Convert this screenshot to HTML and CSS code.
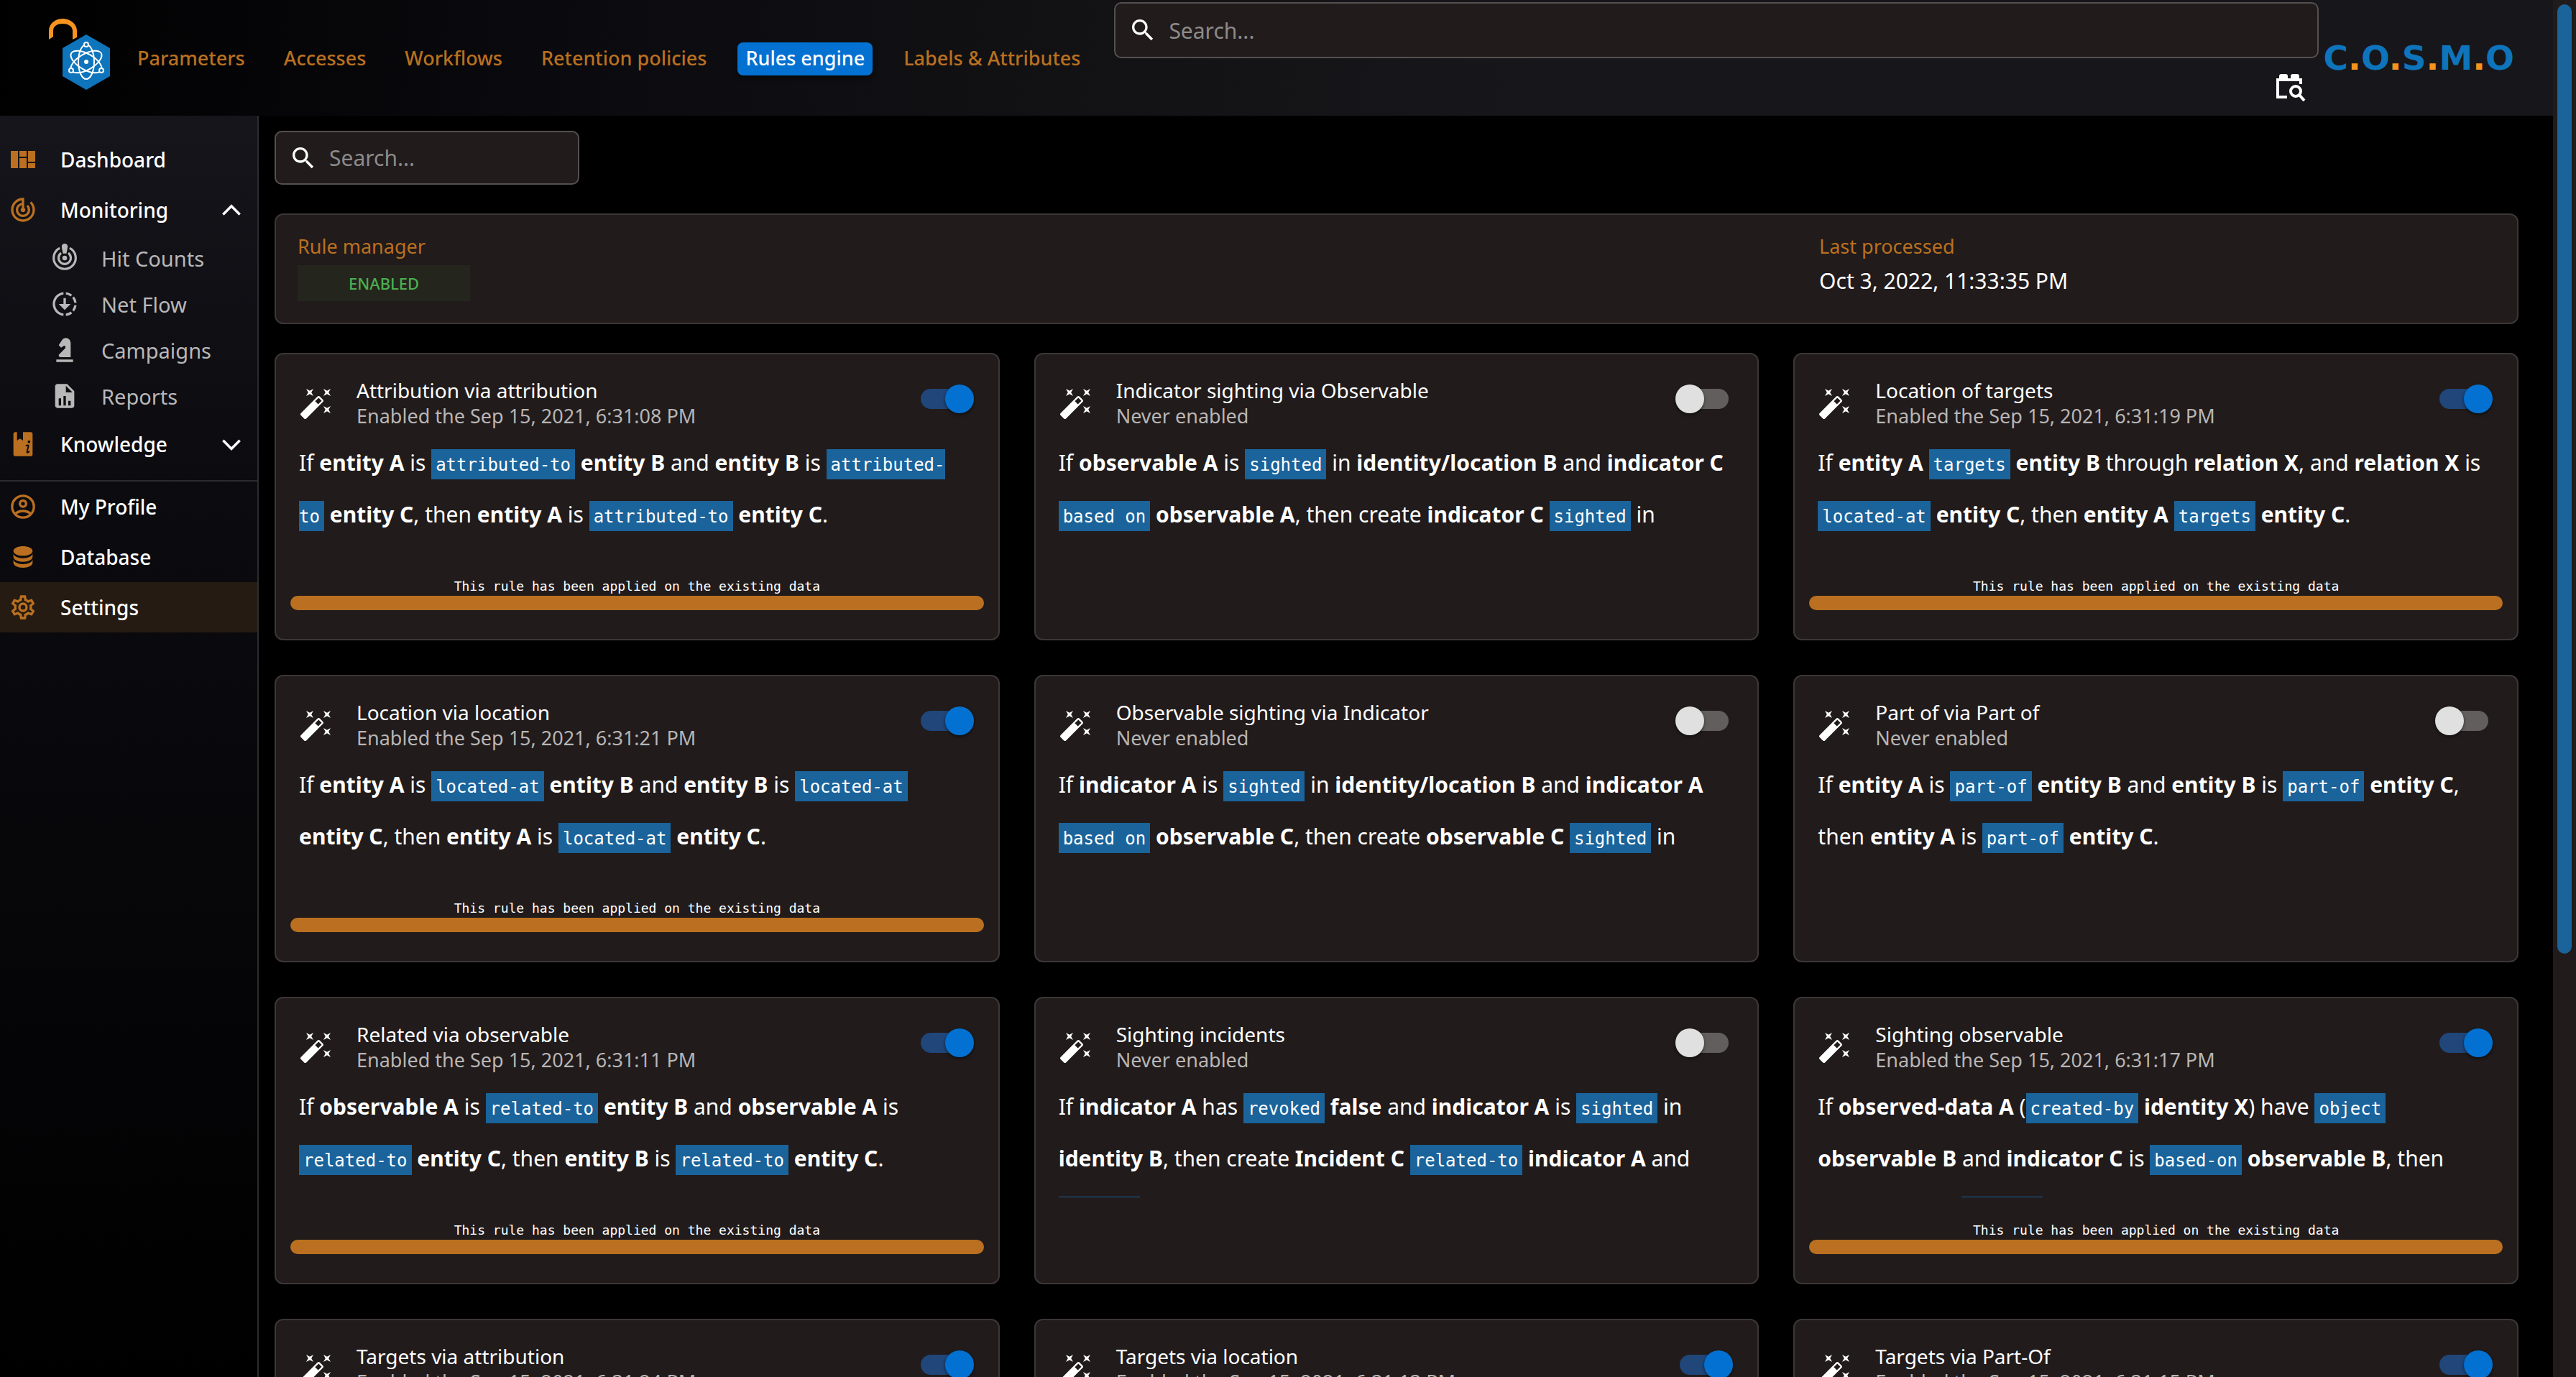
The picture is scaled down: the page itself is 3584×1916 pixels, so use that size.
FILE: index.html
```html
<!DOCTYPE html>
<html lang="en">
<head>
<meta charset="utf-8">
<title>Rules engine - Settings</title>
<link rel="stylesheet" href="styles.css">
</head>
<body>
<svg class="sprite" aria-hidden="true">
  <symbol id="i-search" viewBox="0 0 24 24"><path d="M15.5 14h-.79l-.28-.27C15.41 12.59 16 11.11 16 9.5 16 5.91 13.09 3 9.5 3S3 5.91 3 9.5 5.91 16 9.5 16c1.61 0 3.09-.59 4.23-1.57l.27.28v.79l5 4.99L20.49 19l-4.99-5zm-6 0C7.01 14 5 11.99 5 9.5S7.01 5 9.5 5 14 7.01 14 9.5 11.99 14 9.5 14z"/></symbol>
  <symbol id="i-wand" viewBox="0 0 24 24"><path d="M7.5,5.6L5,7L6.4,4.5L5,2L7.5,3.4L10,2L8.6,4.5L10,7L7.5,5.6M19.5,15.4L22,14L20.6,16.5L22,19L19.5,17.6L17,19L18.4,16.5L17,14L19.5,15.4M22,2L20.6,4.5L22,7L19.5,5.6L17,7L18.4,4.5L17,2L19.5,3.4L22,2M13.34,12.78L15.78,10.34L13.66,8.22L11.22,10.66L13.34,12.78M14.37,7.29L16.71,9.63C17.1,10 17.1,10.65 16.71,11.04L5.04,22.71C4.65,23.1 4,23.1 3.63,22.71L1.29,20.37C0.9,20 0.9,19.35 1.29,18.96L12.96,7.29C13.35,6.9 14,6.9 14.37,7.29Z"/></symbol>
</svg>
<div class="app">
  <div class="page">
    <header class="topbar">
      <a class="brand" href="#" aria-label="Home">
        <svg width="92" height="104" viewBox="64 24 92 104">
          <path d="M68 55V43C68 32 78 26 87 26S107 32 107 43V52L101 55V43C101 36 94 33 87 33S74 36 74 43V51z" fill="#f7931e"/>
          <path d="M120 48l33 19v39l-33 19-33-19V67z" fill="#0e74bb"/>
          <g fill="none" stroke="#fff" stroke-width="2">
            <ellipse cx="120" cy="86" rx="11" ry="24"/>
            <ellipse cx="120" cy="86" rx="11" ry="24" transform="rotate(60 120 86)"/>
            <ellipse cx="120" cy="86" rx="11" ry="24" transform="rotate(-60 120 86)"/>
            <g fill="#0e74bb"><circle cx="120" cy="62" r="3"/><circle cx="99" cy="98" r="3"/><circle cx="141" cy="98" r="3"/></g>
          </g>
          <circle cx="120" cy="86" r="3" fill="#fff"/>
        </svg>
      </a>
      <nav class="tabs" aria-label="Settings sections">
        <a href="#">Parameters</a>
        <a href="#">Accesses</a>
        <a href="#">Workflows</a>
        <a href="#">Retention policies</a>
        <a href="#" class="active" aria-current="page">Rules engine</a>
        <a href="#">Labels &amp; Attributes</a>
      </nav>
      <div class="top-search">
        <label class="search search-wide">
          <svg class="icon"><use href="#i-search"/></svg>
          <input type="search" placeholder="Search..." aria-label="Search everything">
        </label>
        <button class="bulk" type="button" aria-label="Advanced search">
          <svg width="42" height="42" viewBox="0 0 42 42">
            <path d="M5 10V7a3 3 0 0 1 3-3h6a3 3 0 0 1 3 3v3zM21 10V7a3 3 0 0 1 3-3h6a3 3 0 0 1 3 3v3z" fill="#fff"/>
            <path d="M35 18V12H3V36H16" fill="none" stroke="#fff" stroke-width="4"/>
            <circle cx="28" cy="28" r="7" fill="none" stroke="#fff" stroke-width="4"/>
            <path d="M33 33l7 8" stroke="#fff" stroke-width="4"/>
          </svg>
        </button>
      </div>
      <a class="wordmark" href="#">C<i>.</i>O<i>.</i>S<i>.</i>M<i>.</i>O</a>
    </header>
    <div class="body">
      <nav class="sidebar" aria-label="Main">
        <a class="item" href="#"><svg class="icon" viewBox="0 0 40 40"><path d="M3 8h10v24H3zM15 8h10v8H15zM15 18h10v14H15zM27 8h10v15H27zM27 25h10v7H27z"/></svg>Dashboard</a>
        <button class="item" type="button" aria-expanded="true"><svg class="icon" viewBox="0 0 24 24"><path d="M19.07 4.93l-1.41 1.41C19.1 7.79 20 9.79 20 12c0 4.42-3.58 8-8 8s-8-3.58-8-8c0-4.08 3.05-7.44 7-7.93v2.02C8.16 6.57 6 9.03 6 12c0 3.31 2.69 6 6 6s6-2.69 6-6c0-1.66-.67-3.16-1.76-4.24l-1.41 1.41C15.55 9.9 16 10.9 16 12c0 2.21-1.79 4-4 4s-4-1.79-4-4c0-1.86 1.28-3.41 3-3.86v2.14c-.6.35-1 .98-1 1.72 0 1.1.9 2 2 2s2-.9 2-2c0-.74-.4-1.38-1-1.72V2h-1C6.48 2 2 6.48 2 12s4.48 10 10 10 10-4.48 10-10c0-2.76-1.12-5.26-2.93-7.07z"/></svg>Monitoring<svg class="chevron" viewBox="0 0 24 24"><path d="M2 17.500l10-10 10 10"/></svg></button>
        <div class="sub">
          <a class="item" href="#"><svg class="icon" viewBox="0 0 24 24"><g fill="none" stroke="#b8b8b8" stroke-width="1.900"><path d="M7.900 3.700A9.200 9.200 0 1 0 16.100 3.700"/><path d="M9 7.800A5.100 5.100 0 1 0 15 7.800"/></g><circle cx="12" cy="12" r="2"/><path d="M12 0c1.600 0 2.600 1.100 2.500 2.700L13.500 8.200h-3L9.500 2.700C9.400 1.100 10.400 0 12 0z"/></svg>Hit Counts</a>
          <a class="item" href="#"><svg class="icon" viewBox="0 0 24 24"><path d="M18.320 4.260A9.949 9.949 0 0 0 13 2.050v2.020c1.460.18 2.790.76 3.900 1.620l1.420-1.430zM19.930 11h2.020c-.2-2.010-1-3.840-2.210-5.320L18.310 7.100a7.941 7.941 0 0 1 1.620 3.900zm-1.620 5.900 1.430 1.430a9.981 9.981 0 0 0 2.210-5.320h-2.020a7.945 7.945 0 0 1-1.620 3.890zM13 19.930v2.020c2.010-.2 3.840-1 5.320-2.210l-1.430-1.430c-1.100.86-2.430 1.440-3.890 1.620zM11 7h2v5h4l-5 5-5-5h4zM11 19.930v2.020c-5.050-.5-9-4.760-9-9.950s3.950-9.450 9-9.950v2.020C7.050 4.560 4 7.920 4 12s3.050 7.440 7 7.930z"/></svg>Net Flow</a>
          <a class="item" href="#"><svg class="icon" viewBox="0 0 24 24"><path d="M19,22H5V20H19V22M13,2V2C11.750,2 10.580,2.620 9.890,3.660L7,8L9,10L11.060,8.630C11.500,8.320 12.140,8.440 12.450,8.900C12.470,8.930 12.500,8.960 12.500,9V9C12.800,9.590 12.690,10.300 12.220,10.770L7.420,15.570C6.870,16.130 6.870,17.030 7.430,17.580C7.690,17.840 8.050,18 8.420,18H17V6A4,4 0 0,0 13,2Z"/></svg>Campaigns</a>
          <a class="item" href="#"><svg class="icon" viewBox="0 0 24 24"><path d="M13,9H18.500L13,3.500V9M6,2H14L20,8V20A2,2 0 0,1 18,22H6C4.890,22 4,21.100 4,20V4C4,2.890 4.890,2 6,2M7,20H9V14H7V20M11,20H13V12H11V20M15,20H17V16H15V20Z"/></svg>Reports</a>
        </div>
        <button class="item" type="button" aria-expanded="false"><svg class="icon" viewBox="0 0 24 24"><path fill-rule="evenodd" d="M5.500 2H7V9l2.500-1.700L12 9V2h6.500A1.500 1.500 0 0 1 20 3.500v17a1.500 1.500 0 0 1-1.500 1.500h-13A1.500 1.500 0 0 1 4 20.500v-17A1.500 1.500 0 0 1 5.500 2z"/><circle cx="17" cy="10" r="1.100" fill="#0d0c11"/><path d="M14.300 13.500c1.400-.8 2.200-.9 2.300-.2.100.6-1.500 4.600-1.200 5.600.2.500 1-.1 2-1" fill="none" stroke="#0d0c11" stroke-width="1.200"/></svg>Knowledge<svg class="chevron" viewBox="0 0 24 24"><path d="M2 7.500l10 10 10-10"/></svg></button>
        <hr>
        <a class="item" href="#"><svg class="icon" viewBox="0 0 24 24"><g fill="none" stroke="#ba7020" stroke-width="2"><circle cx="12" cy="12" r="9.100"/><circle cx="12" cy="9.500" r="2.600"/><path d="M5.500 18c3.500-3.200 9.500-3.200 13 0"/></g></svg>My Profile</a>
        <a class="item" href="#"><svg class="icon" viewBox="0 0 24 24"><path d="M12,3C7.580,3 4,4.790 4,7C4,9.210 7.580,11 12,11C16.420,11 20,9.210 20,7C20,4.790 16.420,3 12,3M4,9V12C4,14.210 7.580,16 12,16C16.420,16 20,14.210 20,12V9C20,11.210 16.420,13 12,13C7.580,13 4,11.210 4,9M4,14V17C4,19.210 7.580,21 12,21C16.420,21 20,19.210 20,17V14C20,16.210 16.420,18 12,18C7.580,18 4,16.210 4,14Z"/></svg>Database</a>
        <a class="item active" href="#" aria-current="page"><svg class="icon" viewBox="0 0 24 24"><path d="M12,8A4,4 0 0,1 16,12A4,4 0 0,1 12,16A4,4 0 0,1 8,12A4,4 0 0,1 12,8M12,10A2,2 0 0,0 10,12A2,2 0 0,0 12,14A2,2 0 0,0 14,12A2,2 0 0,0 12,10M10,22C9.750,22 9.540,21.820 9.500,21.580L9.130,18.930C8.500,18.680 7.960,18.340 7.440,17.940L4.950,18.950C4.730,19.030 4.460,18.950 4.340,18.730L2.340,15.270C2.210,15.050 2.270,14.780 2.460,14.630L4.570,12.970L4.500,12L4.570,11L2.460,9.370C2.270,9.220 2.210,8.950 2.340,8.730L4.340,5.270C4.460,5.050 4.730,4.960 4.950,5.050L7.440,6.050C7.960,5.660 8.500,5.320 9.130,5.070L9.500,2.420C9.540,2.180 9.750,2 10,2H14C14.250,2 14.460,2.180 14.500,2.420L14.870,5.070C15.500,5.320 16.040,5.660 16.560,6.050L19.050,5.050C19.270,4.960 19.540,5.050 19.660,5.270L21.660,8.730C21.790,8.950 21.730,9.220 21.540,9.370L19.430,11L19.500,12L19.430,13L21.540,14.630C21.730,14.780 21.790,15.050 21.660,15.270L19.660,18.730C19.540,18.950 19.270,19.040 19.050,18.950L16.560,17.950C16.040,18.340 15.500,18.680 14.870,18.930L14.500,21.580C14.460,21.820 14.250,22 14,22H10M11.250,4L10.880,6.610C9.680,6.860 8.620,7.500 7.850,8.390L5.440,7.350L4.690,8.650L6.800,10.200C6.400,11.370 6.400,12.640 6.800,13.800L4.680,15.360L5.430,16.660L7.860,15.620C8.630,16.500 9.680,17.140 10.870,17.380L11.240,20H12.760L13.130,17.390C14.320,17.140 15.370,16.500 16.140,15.620L18.570,16.660L19.320,15.360L17.200,13.810C17.600,12.640 17.600,11.370 17.200,10.200L19.310,8.650L18.560,7.350L16.150,8.390C15.380,7.500 14.320,6.860 13.120,6.620L12.750,4H11.250Z"/></svg>Settings</a>
      </nav>
      <main class="content">
        <label class="search search-small">
          <svg class="icon"><use href="#i-search"/></svg>
          <input type="search" placeholder="Search..." aria-label="Search rules">
        </label>
        <section class="manager">
          <div><h2>Rule manager</h2><span class="status">ENABLED</span></div>
          <div><h2>Last processed</h2><p class="date">Oct 3, 2022, 11:33:35 PM</p></div>
        </section>
        <section class="rules">
          <article class="rule">
            <header><svg class="wand"><use href="#i-wand"/></svg><div class="heading"><h3 id="r1">Attribution via attribution</h3><p>Enabled the Sep 15, 2021, 6:31:08 PM</p></div><input class="switch" type="checkbox" aria-labelledby="r1" checked></header>
            <p class="text">If <b>entity A</b> is <code>attributed-to</code> <b>entity B</b> and <b>entity B</b> is <code>attributed-<br>to</code> <b>entity C</b>, then <b>entity A</b> is <code>attributed-to</code> <b>entity C</b>.</p>
            <div class="applied"><span>This rule has been applied on the existing data</span><div class="bar"></div></div>
          </article>
          <article class="rule">
            <header><svg class="wand"><use href="#i-wand"/></svg><div class="heading"><h3 id="r2">Indicator sighting via Observable</h3><p>Never enabled</p></div><input class="switch" type="checkbox" aria-labelledby="r2"></header>
            <p class="text">If <b>observable A</b> is <code>sighted</code> in <b>identity/location B</b> and <b>indicator C</b><br><code>based on</code> <b>observable A</b>, then create <b>indicator C</b> <code>sighted</code> in</p>
          </article>
          <article class="rule">
            <header><svg class="wand"><use href="#i-wand"/></svg><div class="heading"><h3 id="r3">Location of targets</h3><p>Enabled the Sep 15, 2021, 6:31:19 PM</p></div><input class="switch" type="checkbox" aria-labelledby="r3" checked></header>
            <p class="text">If <b>entity A</b> <code>targets</code> <b>entity B</b> through <b>relation X</b>, and <b>relation X</b> is<br><code>located-at</code> <b>entity C</b>, then <b>entity A</b> <code>targets</code> <b>entity C</b>.</p>
            <div class="applied"><span>This rule has been applied on the existing data</span><div class="bar"></div></div>
          </article>
          <article class="rule">
            <header><svg class="wand"><use href="#i-wand"/></svg><div class="heading"><h3 id="r4">Location via location</h3><p>Enabled the Sep 15, 2021, 6:31:21 PM</p></div><input class="switch" type="checkbox" aria-labelledby="r4" checked></header>
            <p class="text">If <b>entity A</b> is <code>located-at</code> <b>entity B</b> and <b>entity B</b> is <code>located-at</code><br><b>entity C</b>, then <b>entity A</b> is <code>located-at</code> <b>entity C</b>.</p>
            <div class="applied"><span>This rule has been applied on the existing data</span><div class="bar"></div></div>
          </article>
          <article class="rule">
            <header><svg class="wand"><use href="#i-wand"/></svg><div class="heading"><h3 id="r5">Observable sighting via Indicator</h3><p>Never enabled</p></div><input class="switch" type="checkbox" aria-labelledby="r5"></header>
            <p class="text">If <b>indicator A</b> is <code>sighted</code> in <b>identity/location B</b> and <b>indicator A</b><br><code>based on</code> <b>observable C</b>, then create <b>observable C</b> <code>sighted</code> in</p>
          </article>
          <article class="rule">
            <header><svg class="wand"><use href="#i-wand"/></svg><div class="heading"><h3 id="r6">Part of via Part of</h3><p>Never enabled</p></div><input class="switch" type="checkbox" aria-labelledby="r6"></header>
            <p class="text">If <b>entity A</b> is <code>part-of</code> <b>entity B</b> and <b>entity B</b> is <code>part-of</code> <b>entity C</b>,<br>then <b>entity A</b> is <code>part-of</code> <b>entity C</b>.</p>
          </article>
          <article class="rule">
            <header><svg class="wand"><use href="#i-wand"/></svg><div class="heading"><h3 id="r7">Related via observable</h3><p>Enabled the Sep 15, 2021, 6:31:11 PM</p></div><input class="switch" type="checkbox" aria-labelledby="r7" checked></header>
            <p class="text">If <b>observable A</b> is <code>related-to</code> <b>entity B</b> and <b>observable A</b> is<br><code>related-to</code> <b>entity C</b>, then <b>entity B</b> is <code>related-to</code> <b>entity C</b>.</p>
            <div class="applied"><span>This rule has been applied on the existing data</span><div class="bar"></div></div>
          </article>
          <article class="rule">
            <header><svg class="wand"><use href="#i-wand"/></svg><div class="heading"><h3 id="r8">Sighting incidents</h3><p>Never enabled</p></div><input class="switch" type="checkbox" aria-labelledby="r8"></header>
            <p class="text">If <b>indicator A</b> has <code>revoked</code> <b>false</b> and <b>indicator A</b> is <code>sighted</code> in<br><b>identity B</b>, then create <b>Incident C</b> <code>related-to</code> <b>indicator A</b> and<br><code>targets</code></p>
          </article>
          <article class="rule">
            <header><svg class="wand"><use href="#i-wand"/></svg><div class="heading"><h3 id="r9">Sighting observable</h3><p>Enabled the Sep 15, 2021, 6:31:17 PM</p></div><input class="switch" type="checkbox" aria-labelledby="r9" checked></header>
            <p class="text">If <b>observed-data A</b> (<code>created-by</code> <b>identity X</b>) have <code>object</code><br><b>observable B</b> and <b>indicator C</b> is <code>based-on</code> <b>observable B</b>, then<br><b>indicator C</b> is <code>sighted</code></p>
            <div class="applied"><span>This rule has been applied on the existing data</span><div class="bar"></div></div>
          </article>
          <article class="rule">
            <header><svg class="wand"><use href="#i-wand"/></svg><div class="heading"><h3 id="r10">Targets via attribution</h3><p>Enabled the Sep 15, 2021, 6:31:24 PM</p></div><input class="switch" type="checkbox" aria-labelledby="r10" checked></header>
          </article>
          <article class="rule">
            <header><svg class="wand"><use href="#i-wand"/></svg><div class="heading"><h3 id="r11">Targets via location</h3><p>Enabled the Sep 15, 2021, 6:31:13 PM</p></div><input class="switch" type="checkbox" aria-labelledby="r11" checked></header>
          </article>
          <article class="rule">
            <header><svg class="wand"><use href="#i-wand"/></svg><div class="heading"><h3 id="r12">Targets via Part-Of</h3><p>Enabled the Sep 15, 2021, 6:31:15 PM</p></div><input class="switch" type="checkbox" aria-labelledby="r12" checked></header>
          </article>
        </section>
      </main>
    </div>
  </div>
  <div class="scrollbar"><div class="thumb"></div></div>
</div>
</body>
</html>
```
FILE: styles.css
```css
:root {
  --accent: #ba7020;
  --primary: #0371d1;
  --chip: #1a639b;
  --paper: #211b1b;
  --line: #3c3736;
}
* { box-sizing: border-box; }
body {
  margin: 0;
  background: #000;
  color: #fff;
  font-family: "Noto Sans", sans-serif;
  font-size: 28px;
}
h2, h3, p { margin: 0; font-weight: 400; }
a { color: inherit; text-decoration: none; }
button { border: 0; padding: 0; background: none; font: inherit; color: inherit; text-align: left; }
svg { display: block; flex: none; fill: currentColor; }
.sprite { width: 0; height: 0; position: absolute; }
.icon { width: 40px; height: 40px; }

.app { display: flex; height: 100vh; overflow: hidden; }
.page { flex: 1; min-width: 0; display: flex; flex-direction: column; }
.scrollbar { width: 32px; padding: 6px; background: var(--paper); }
.thumb { width: 20px; height: calc(69% + 7px); border-radius: 10px; background: var(--chip); }

/* top bar */
.topbar {
  flex: none;
  display: flex;
  height: 161px;
  padding: 0 54px 0 64px;
  background: linear-gradient(95deg, #000 0%, #0c0b10 25%, #121214 42%, #17171b 60%, #17171b 100%);
}
.brand { margin: 24px 24px 0 0; }
.tabs { display: flex; gap: 32px; margin-top: 59px; height: 46px; color: var(--accent); font-size: 27px; font-weight: 500; }
.tabs a { padding: 0 11px; line-height: 44px; border-radius: 8px; white-space: nowrap; }
.tabs .active { background: var(--primary); color: #fff; box-shadow: 0 4px 6px rgba(0, 0, 0, .5); }
.top-search { flex: 1; display: flex; flex-direction: column; margin: 3px 7px 0 36px; }
.bulk { align-self: flex-end; margin: 18px 18px 0 0; }
.search {
  display: flex;
  align-items: center;
  gap: 16px;
  padding: 0 18px;
  background: var(--paper);
  border: 2px solid #555050;
  border-radius: 10px;
}
.search input {
  flex: 1;
  min-width: 0;
  padding: 0;
  border: 0;
  outline: 0;
  background: none;
  color: #fff;
  font: inherit;
  font-size: 30px;
}
.search input::placeholder { color: #8d8a8a; opacity: 1; }
.search-wide { height: 78px; }
.search-small { width: 424px; height: 75px; }
.wordmark { align-self: center; color: #0e74bb; font: 700 47px/56px "DejaVu Sans", sans-serif; white-space: nowrap; }
.wordmark i { color: #f7931e; font-style: normal; }

/* sidebar */
.body { flex: 1; min-height: 0; display: flex; }
.sidebar {
  flex: none;
  width: 360px;
  padding-top: 26px;
  border-right: 2px solid #2c2c2f;
  background: linear-gradient(180deg, #16151b 0%, #0c0b10 28%, #000 100%);
  font-weight: 500;
}
.item { display: flex; align-items: center; gap: 32px; width: 100%; height: 70px; padding-left: 12px; }
.item .icon { color: var(--accent); }
.item.active { background: #261b12; }
.sub { font-size: 29px; font-weight: 400; color: #b8b8b8; }
.sub .item { height: 64px; gap: 31px; padding-left: 70px; }
.sub .icon { color: #b8b8b8; }
.chevron { width: 28px; height: 28px; margin: 0 22px 0 auto; fill: none; stroke: #fff; stroke-width: 3; }
.sidebar hr { height: 2px; margin: 15px 0 0; border: 0; background: #2c2c2f; }

/* content */
.content { flex: 1; min-width: 0; padding: 21px 48px 0 22px; overflow: hidden; }
.manager {
  display: grid;
  grid-template-columns: 9fr 4fr;
  height: 154px;
  margin: 40px 0;
  padding: 26px 30px;
  background: var(--paper);
  border: 2px solid var(--line);
  border-radius: 12px;
}
.manager h2 { color: var(--accent); font-size: 27px; line-height: 36px; }
.status {
  display: block;
  width: 240px;
  margin-top: 8px;
  background: rgba(76, 175, 80, .08);
  color: #4caf50;
  font-size: 22px;
  font-weight: 500;
  line-height: 50px;
  text-align: center;
}
.date { font-size: 30px; line-height: 60px; }
.rules { display: grid; grid-template-columns: repeat(3, minmax(0, 1fr)); gap: 48px; }
.rule {
  min-height: 400px;
  padding: 32px 20px 0;
  background: var(--paper);
  border: 2px solid var(--line);
  border-radius: 12px;
}
.rule header { display: flex; align-items: center; gap: 32px; padding: 0 14px 0 12px; }
.wand { width: 48px; height: 48px; }
.heading { flex: 1; line-height: 36px; }
.heading h3 { font-size: 28px; }
.heading p { color: #b8b5b5; font-size: 27px; }
.switch {
  appearance: none;
  align-self: flex-start;
  display: flex;
  width: 80px;
  height: 40px;
  margin: 10px 0 0;
  position: relative;
}
.switch::before { content: ""; width: 68px; height: 28px; margin: 6px; border-radius: 14px; background: #625e5e; }
.switch::after {
  content: "";
  position: absolute;
  left: 0;
  width: 40px;
  height: 40px;
  border-radius: 50%;
  background: #e0e0e0;
  box-shadow: 0 2px 4px rgba(0, 0, 0, .5);
}
.switch:checked::before { background: #20467a; }
.switch:checked::after { left: auto; right: 0; background: var(--primary); }
.text {
  height: 162px;
  margin: 11px 0 0 12px;
  overflow: hidden;
  font-size: 30px;
  line-height: 72px;
  white-space: nowrap;
}
.text b { font-weight: 700; }
.text code {
  padding: 8px 6px 6px;
  background: var(--chip);
  font: 24px/24px "DejaVu Sans Mono", monospace;
}
.applied { margin-top: 33px; text-align: center; font: 18px/26px "DejaVu Sans Mono", monospace; }
.applied span { display: block; }
.bar { height: 20px; border-radius: 10px; background: var(--accent); }
```
